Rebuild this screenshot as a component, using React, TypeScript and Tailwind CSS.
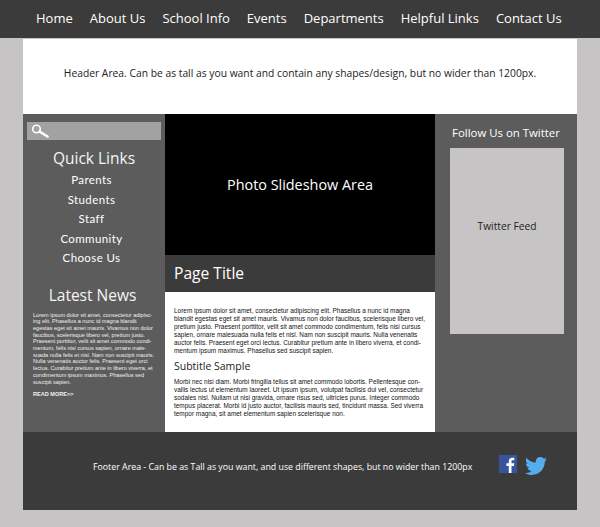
import React from "react";
import { FaTwitter } from "react-icons/fa";

const nav = ["Home", "About Us", "School Info", "Events", "Departments", "Helpful Links", "Contact Us"];
const links = ["Parents", "Students", "Staff", "Community", "Choose Us"];
const news = [
  "Lorem ipsum dolor sit amet, consectetur adipisc-",
  "ing elit. Phasellus a nunc id magna blandit",
  "egestas eget sit amet mauris. Vivamus non dolor",
  "faucibus, scelerisque libero vel, pretium justo.",
  "Praesent porttitor, velit sit amet commodo condi-",
  "mentum, felis nisi cursus sapien, ornare male-",
  "suada nulla felis et nisl. Nam non suscipit mauris.",
  "Nulla venenatis auctor felis. Praesent eget orci",
  "lectus. Curabitur pretium ante in libero viverra, et",
  "condimentum ipsum maximus. Phasellus sed",
  "suscipit sapien.",
];
const p1 = [
  "Lorem ipsum dolor sit amet, consectetur adipiscing elit. Phasellus a nunc id magna",
  "blandit egestas eget sit amet mauris. Vivamus non dolor faucibus, scelerisque libero vel,",
  "pretium justo. Praesent porttitor, velit sit amet commodo condimentum, felis nisi cursus",
  "sapien, ornare malesuada nulla felis et nisl. Nam non suscipit mauris. Nulla venenatis",
  "auctor felis. Praesent eget orci lectus. Curabitur pretium ante in libero viverra, et condi-",
  "mentum ipsum maximus. Phasellus sed suscipit sapien.",
];
const p2 = [
  "Morbi nec nisi diam. Morbi fringilla tellus sit amet commodo lobortis. Pellentesque con-",
  "vallis lectus ut elementum laoreet. Ut ipsum ipsum, volutpat facilisis dui vel, consectetur",
  "sodales nisl. Nullam ut nisi gravida, ornare risus sed, ultricies purus. Integer commodo",
  "tempus placerat. Morbi id justo auctor, facilisis mauris sed, tincidunt massa. Sed viverra",
  "tempor magna, sit amet elementum sapien scelerisque non.",
];

function Lines({ lines }: { lines: string[] }) {
  return (
    <>
      {lines.map((l) => (
        <div key={l} className="whitespace-nowrap">{l}</div>
      ))}
    </>
  );
}

export default function App() {
  return (
    <div className="w-[600px] h-[527px] overflow-hidden bg-[#c6c4c5] font-['Open_Sans','Noto_Sans',sans-serif]">
      <nav className="h-[38px] bg-[#3c3b3b] flex items-center gap-[17px] pl-[36px] text-white text-[13px] font-medium">
        {nav.map((n) => (
          <div key={n} className="whitespace-nowrap">{n}</div>
        ))}
      </nav>
      <div className="mx-[23px] w-[554px]">
        <header className="mt-px h-[75px] bg-white flex items-center justify-center pb-[5px] text-[10.3px] text-[#222]">
          Header Area. Can be as tall as you want and contain any shapes/design, but no wider than 1200px.
        </header>
        <main className="h-[318px] flex">
          <aside className="w-[142px] bg-[#5c5c5c] text-white pt-2">
            <div className="mx-1 h-[18px] bg-[#a3a2a2] flex items-center pl-1">
              <svg width="18" height="14" viewBox="0 0 18 14" fill="none">
                <circle cx="5.5" cy="5" r="3.8" stroke="white" strokeWidth="1.6" />
                <path d="M8.5 7.5 L16.5 12.5" stroke="white" strokeWidth="2.6" strokeLinecap="round" />
              </svg>
            </div>
            <h2 className="mt-[6px] text-center text-[15.5px] leading-[24px] text-[#f4f4f4] font-medium">Quick Links</h2>
            <ul className="pr-[5px] font-['Lato',sans-serif] text-[11.5px] tracking-[0.4px] text-center">
              {links.map((l) => (
                <li key={l} className="h-[19.5px] leading-[19.5px]">{l}</li>
              ))}
            </ul>
            <h2 className="mt-[15px] pr-[3px] text-center text-[15.5px] leading-[24px] text-[#f4f4f4] font-medium">Latest News</h2>
            <div className="mt-[5px] ml-[10px] font-['Liberation_Sans',sans-serif] text-[5.55px] leading-[6.7px] text-[#f0f0f0]">
              <Lines lines={news} />
            </div>
            <div className="mt-[6px] ml-[10px] font-['Liberation_Sans',sans-serif] text-[5.55px] leading-[7px] font-bold text-[#f0f0f0]">READ MORE&gt;&gt;</div>
          </aside>
          <section className="w-[270px] flex flex-col">
            <div className="h-[141px] bg-black text-white flex items-center justify-center text-[14.4px] font-medium">
              Photo Slideshow Area
            </div>
            <div className="h-[37px] bg-[#3c3b3b] text-white flex items-center pl-[9px] pt-px text-[15.6px] font-medium">
              Page Title
            </div>
            <div className="flex-1 bg-white pt-[15px] pl-[9px] text-[#222]">
              <div className="font-['Liberation_Sans',sans-serif] text-[6.45px] leading-[8px] text-[#111]">
                <Lines lines={p1} />
              </div>
              <h3 className="mt-[3px] text-[10.5px] leading-[16px] font-normal text-[#222]">Subtitle Sample</h3>
              <div className="mt-[4px] font-['Liberation_Sans',sans-serif] text-[6.45px] leading-[8px] text-[#111]">
                <Lines lines={p2} />
              </div>
            </div>
          </section>
          <aside className="w-[142px] bg-[#5c5c5c] px-[15px] pt-[10px]">
            <h2 className="text-center text-[11.4px] leading-[17px] font-medium text-white whitespace-nowrap">Follow Us on Twitter</h2>
            <div className="mt-[7px] h-[186px] w-[114px] bg-[#c6c4c5] flex justify-center pt-[71px] text-[10.2px] font-medium text-[#222]">
              Twitter Feed
            </div>
          </aside>
        </main>
        <footer className="h-[78px] bg-[#3c3b3b] flex items-start text-white pl-[70px] pt-[28px]">
          <div className="text-[8.8px] leading-[14px] whitespace-nowrap w-[406px]">
            Footer Area - Can be as Tall as you want, and use different shapes, but no wider than 1200px
          </div>
          <div className="-mt-[5px] flex items-start">
            <svg width="18" height="18" viewBox="0 0 18 18" className="block">
              <rect width="18" height="18" fill="#37559d" />
              <path d="M12.5 18v-7h2.4l.4-2.8h-2.8V6.6c0-.8.3-1.3 1.4-1.3h1.4V2.8c-.3 0-1.1-.1-2-.1-2.1 0-3.5 1.3-3.5 3.5v2H7.4V11h2.4v7z" fill="white" />
            </svg>
            <FaTwitter size={22} color="#55acee" className="ml-[8px]" />
          </div>
        </footer>
      </div>
    </div>
  );
}
